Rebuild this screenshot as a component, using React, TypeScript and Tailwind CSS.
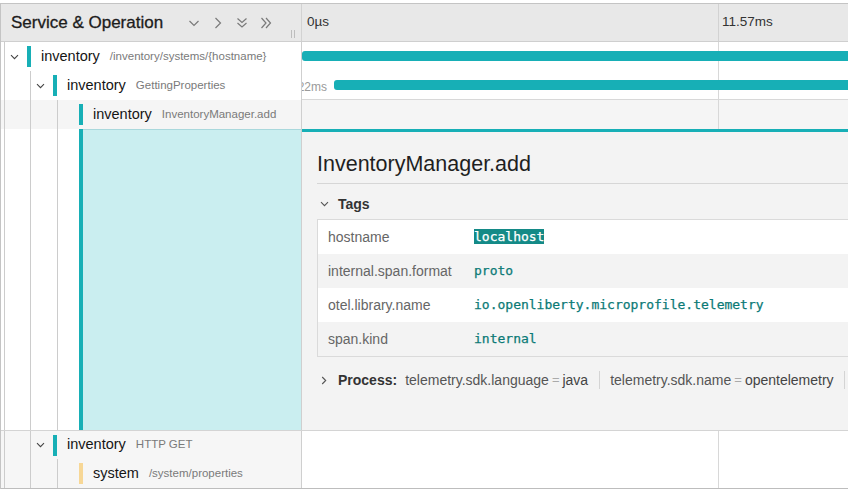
import React from "react";

const TEAL = "bg-[#17afb6]";

function SmallChevDown({ color = "#444" }: { color?: string }) {
  return (
    <svg width="9" height="6" viewBox="0 0 9 6">
      <path d="M1 1.2l3.5 3.5L8 1.2" stroke={color} strokeWidth="1.1" fill="none" />
    </svg>
  );
}

function SmallChevRight({ color = "#444" }: { color?: string }) {
  return (
    <svg width="6" height="9" viewBox="0 0 6 9">
      <path d="M1.2 1l3.5 3.5L1.2 8" stroke={color} strokeWidth="1.1" fill="none" />
    </svg>
  );
}

function HeaderIcons() {
  const s = { stroke: "#7a7a7a", strokeWidth: 1.2, fill: "none" };
  return (
    <div className="flex items-center gap-[10px]">
      <svg width="14" height="14" viewBox="0 0 14 14">
        <path d="M2.5 5l4.5 4.5L11.5 5" {...s} />
      </svg>
      <svg width="14" height="14" viewBox="0 0 14 14">
        <path d="M4.5 2l5 5-5 5" {...s} />
      </svg>
      <svg width="14" height="14" viewBox="0 0 14 14">
        <path d="M2.5 2.5l4.5 4 4.5-4M2.5 7l4.5 4 4.5-4" {...s} />
      </svg>
      <svg width="14" height="14" viewBox="0 0 14 14">
        <path d="M2.5 2l4.5 5-4.5 5M7 2l4.5 5-4.5 5" {...s} />
      </svg>
    </div>
  );
}

function TreeCell({
  depth,
  chevron,
  bar,
  service,
  op,
  bg,
}: {
  depth: number;
  chevron: boolean;
  bar: string;
  service: string;
  op: string;
  bg: string;
}) {
  return (
    <div className={`flex w-[301px] shrink-0 items-stretch overflow-hidden border-r border-[#cfcfcf] ${bg}`}>
      <div className="w-[3px] shrink-0" />
      {depth >= 1 && <div className="w-[26px] shrink-0 border-l border-[#cccccc]" />}
      {depth >= 2 && <div className="w-[27px] shrink-0 border-l border-[#cccccc]" />}
      {chevron ? (
        <div className="flex w-[23px] shrink-0 items-center justify-center border-l border-[#cccccc] pr-[4px]">
          <SmallChevDown />
        </div>
      ) : (
        <div className="w-[22px] shrink-0 border-l border-[#cccccc]" />
      )}
      <div className="flex items-center">
        <div className={`h-[21px] w-[4px] shrink-0 ${bar}`} />
        <span className="ml-[10px] whitespace-nowrap text-[14.5px] text-[#151515]">{service}</span>
        <span className="ml-[10px] whitespace-nowrap text-[11.5px] text-[#7a7a7a]">{op}</span>
      </div>
    </div>
  );
}

function Grid({ lineColor = "border-[#d8d8d8]" }: { lineColor?: string }) {
  return <div className={`w-[417px] shrink-0 border-r ${lineColor}`} />;
}

const tags: { k: string; v: string; hl?: boolean }[] = [
  { k: "hostname", v: "localhost", hl: true },
  { k: "internal.span.format", v: "proto" },
  { k: "otel.library.name", v: "io.openliberty.microprofile.telemetry" },
  { k: "span.kind", v: "internal" },
];

export default function App() {
  return (
    <div className="h-[502px] w-[848px] overflow-hidden bg-white font-['Liberation_Sans',Arial,sans-serif] text-[#222]">
      <div className="mt-[3px] w-[900px] border-l border-t border-[#c4c4c4]">
        {/* Header */}
        <div className="flex h-[38px] border-b border-[#cfcfcf] bg-[#e8e8e8]">
          <div className="flex w-[301px] shrink-0 items-center border-r border-[#d2d2d2] pl-[10px]">
            <span className="whitespace-nowrap text-[17px] text-[#1c1c1c] [-webkit-text-stroke:0.3px_#1c1c1c]">
              Service &amp; Operation
            </span>
            <div className="flex-1" />
            <HeaderIcons />
            <div className="w-[18px] shrink-0" />
            <div className="mb-[3px] flex h-[8px] gap-[2px] self-end">
              <span className="w-px bg-[#bdbdbd]" />
              <span className="w-px bg-[#bdbdbd]" />
            </div>
            <div className="w-[6px] shrink-0" />
          </div>
          <div className="flex flex-1 text-[13.5px] text-[#333]">
            <div className="flex w-[417px] shrink-0 items-center border-r border-[#d2d2d2] pl-[5px]">0µs</div>
            <div className="flex flex-1 items-center pl-[3px]">11.57ms</div>
          </div>
        </div>

        {/* Row 1 */}
        <div className="flex h-[29px]">
          <TreeCell depth={0} chevron bar={TEAL} service="inventory" op="/inventory/systems/{hostname}" bg="bg-white" />
          <div className="relative flex flex-1 overflow-hidden bg-white">
            <Grid />
            <div className={`absolute left-0 right-0 top-[9px] h-[10px] rounded-[3px] ${TEAL}`} />
          </div>
        </div>

        {/* Row 2 */}
        <div className="flex h-[29px]">
          <TreeCell depth={1} chevron bar={TEAL} service="inventory" op="GettingProperties" bg="bg-white" />
          <div className="relative flex flex-1 overflow-hidden border-b border-[#d8d8d8] bg-white">
            <Grid />
            <span className="absolute right-[calc(100%-25px)] top-[7px] whitespace-nowrap text-[12px] text-[#9a9a9a]">1.22ms</span>
            <div className={`absolute left-[32px] right-0 top-[9px] h-[10px] rounded-[3px] ${TEAL}`} />
          </div>
        </div>

        {/* Row 3 */}
        <div className="flex h-[29px]">
          <TreeCell depth={2} chevron={false} bar={TEAL} service="inventory" op="InventoryManager.add" bg="bg-[#f5f5f5]" />
          <div className="flex flex-1 bg-[#f5f5f5]">
            <Grid />
          </div>
        </div>

        {/* Detail */}
        <div className="flex h-[301px]">
          <div className="flex w-[301px] shrink-0 items-stretch border-r border-[#cfcfcf] bg-white">
            <div className="w-[3px] shrink-0" />
            <div className="w-[26px] shrink-0 border-l border-[#cccccc]" />
            <div className="w-[27px] shrink-0 border-l border-[#cccccc]" />
            <div className="w-[22px] shrink-0 border-l border-[#cccccc]" />
            <div className={`w-[4px] shrink-0 ${TEAL}`} />
            <div className="flex-1 border-t border-[#a9d8dc] bg-[#caeef0]" />
          </div>
          <div className="flex-1 border-t-[3px] border-[#17afb6] bg-[#f3f3f3] pl-[15px]">
            <div className="pt-[18px] text-[21.5px] leading-[28px] text-[#1f1f1f]">InventoryManager.add</div>
            <div className="mt-[5px] border-t border-[#d6d6d6]" />
            <div className="mt-[10px] flex h-[20px] items-center">
              <div className="ml-[3px] flex w-[9px] justify-center">
                <SmallChevDown color="#555" />
              </div>
              <span className="ml-[9px] text-[14px] font-bold text-[#333]">Tags</span>
            </div>
            <div className="mt-[5px] border border-r-0 border-[#dadada]">
              {tags.map((t, i) => (
                <div key={t.k} className={`flex h-[34px] items-center ${i % 2 === 0 ? "bg-white" : "bg-[#f3f3f3]"}`}>
                  <div className="w-[156px] shrink-0 pl-[10px] text-[14px] text-[#666]">{t.k}</div>
                  <div className="font-['DejaVu_Sans_Mono',monospace] text-[13px] text-[#0b7a76] [-webkit-text-stroke:0.25px_#0b7a76]">
                    {t.hl ? (
                      <span className="inline-block bg-[#148a87] leading-[15px] text-white [-webkit-text-stroke:0.25px_#ffffff]">
                        {t.v}
                      </span>
                    ) : (
                      t.v
                    )}
                  </div>
                </div>
              ))}
            </div>
            <div className="mt-[13px] flex h-[20px] items-center whitespace-nowrap text-[14px]">
              <div className="ml-[4px] flex w-[6px] justify-center">
                <SmallChevRight color="#555" />
              </div>
              <span className="ml-[11px] font-bold text-[#333]">Process:</span>
              <span className="ml-[8px] text-[#555]">telemetry.sdk.language</span>
              <span className="mx-[3px] text-[13px] text-[#aaa]">=</span>
              <span className="text-[#444]">java</span>
              <span className="ml-[11px] h-[18px] w-px bg-[#d4d4d4]" />
              <span className="ml-[10px] text-[#555]">telemetry.sdk.name</span>
              <span className="mx-[3px] text-[13px] text-[#aaa]">=</span>
              <span className="text-[#444]">opentelemetry</span>
              <span className="ml-[10px] h-[18px] w-px bg-[#d4d4d4]" />
            </div>
          </div>
        </div>

        {/* Row 4 */}
        <div className="flex h-[29px] border-t border-[#d4d4d4]">
          <TreeCell depth={1} chevron bar={TEAL} service="inventory" op="HTTP GET" bg="bg-[#f6f6f6]" />
          <div className="flex flex-1 bg-white">
            <Grid />
          </div>
        </div>

        {/* Row 5 */}
        <div className="flex h-[30px] border-b border-[#bdbdbd]">
          <TreeCell depth={2} chevron={false} bar="bg-[#f7d796]" service="system" op="/system/properties" bg="bg-[#f6f6f6]" />
          <div className="flex flex-1 bg-white">
            <Grid />
          </div>
        </div>
      </div>
    </div>
  );
}
